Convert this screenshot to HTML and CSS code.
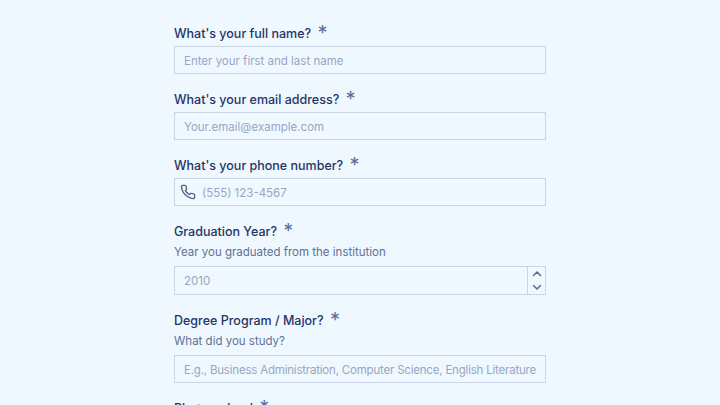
FILE: index.html
```html
<!DOCTYPE html>
<html lang="en">
<head>
  <meta charset="UTF-8" />
  <title>Application form</title>
  <link rel="stylesheet" href="styles.css">
</head>
<body>
  <form class="form" autocomplete="off">
    <div class="field">
      <label class="label" for="fullName">What's your full name? <span class="req">*</span></label>
      <input class="input" type="text" id="fullName" placeholder="Enter your first and last name" />
    </div>
    <div class="field">
      <label class="label" for="email">What's your email address? <span class="req">*</span></label>
      <input class="input" type="text" id="email" placeholder="Your.email@example.com" />
    </div>
    <div class="field">
      <label class="label" for="phone">What's your phone number? <span class="req">*</span></label>
      <div class="box">
        <svg class="phone-icon" width="16" height="16" viewBox="0 0 24 24" fill="none" stroke="#4f6088" stroke-width="2" stroke-linecap="round" stroke-linejoin="round">
          <path d="M22 16.9v3a2 2 0 0 1-2.2 2 19.8 19.8 0 0 1-8.6-3.1 19.5 19.5 0 0 1-6-6A19.8 19.8 0 0 1 2.1 4.2 2 2 0 0 1 4.1 2h3a2 2 0 0 1 2 1.7c.1 1 .4 1.9.7 2.8a2 2 0 0 1-.5 2.1L8.1 9.9a16 16 0 0 0 6 6l1.3-1.3a2 2 0 0 1 2.1-.4c.9.3 1.8.6 2.8.7a2 2 0 0 1 1.7 2z"/>
        </svg>
        <input class="input-bare" type="text" id="phone" placeholder="(555) 123-4567" />
      </div>
    </div>
    <div class="field">
      <label class="label" for="year">Graduation Year? <span class="req">*</span></label>
      <p class="hint">Year you graduated from the institution</p>
      <div class="box box-tall">
        <input class="input-bare year" type="text" id="year" placeholder="2010" />
        <div class="stepper">
          <button class="step" type="button">
            <svg width="12" height="12" viewBox="0 0 12 12" fill="none" stroke="#5a6b92" stroke-width="1.5" stroke-linecap="round" stroke-linejoin="round"><path d="M2.5 7.5 6 4l3.5 3.5"/></svg>
          </button>
          <button class="step" type="button">
            <svg width="12" height="12" viewBox="0 0 12 12" fill="none" stroke="#5a6b92" stroke-width="1.5" stroke-linecap="round" stroke-linejoin="round"><path d="M2.5 4.5 6 8l3.5-3.5"/></svg>
          </button>
        </div>
      </div>
    </div>
    <div class="field">
      <label class="label" for="major">Degree Program / Major? <span class="req">*</span></label>
      <p class="hint">What did you study?</p>
      <input class="input input-long" type="text" id="major" placeholder="E.g., Business Administration, Computer Science, English Literature" />
    </div>
    <div class="field">
      <label class="label" for="photo">Photo upload <span class="req">*</span></label>
    </div>
  </form>
</body>
</html>
```

FILE: styles.css
```css
html, body {
  height: 405px;
  overflow: hidden;
}

body {
  margin: 0;
  background: #f0f8ff;
  font-family: Inter, 'Noto Sans', sans-serif;
  color: #1f3566;
}

.form {
  width: 372px;
  margin: 0 auto;
  padding-top: 24px;
  display: flex;
  flex-direction: column;
  gap: 16px;
}

.field {
  display: flex;
  flex-direction: column;
}

.label {
  font-size: 12.5px;
  font-weight: 500;
  line-height: 20px;
  height: 18px;
  margin-bottom: 4px;
  white-space: nowrap;
}

.req {
  font-size: 20px;
  font-weight: 400;
  line-height: 0;
  color: #5a6f9c;
  margin-left: 3px;
  position: relative;
  top: 2px;
}

.hint {
  margin: -1px 0 5px;
  font-size: 11.5px;
  line-height: 18px;
  color: #5f7095;
}

.input,
.box {
  box-sizing: border-box;
  width: 100%;
  height: 28px;
  border: 1.5px solid #c9d4e5;
  background: #f0f8ff;
}

.box-tall {
  height: 29px;
}

.input {
  padding: 1px 9px 0;
  font: inherit;
  font-size: 11.5px;
  color: #1f3566;
  outline: none;
}

.input-long {
  letter-spacing: -0.2px;
}

.box {
  display: flex;
  align-items: center;
}

.input-bare {
  flex: 1;
  min-width: 0;
  height: 100%;
  padding: 1px 9px 0 6px;
  border: none;
  background: none;
  font: inherit;
  font-size: 11.5px;
  outline: none;
}

.input-bare.year {
  padding-left: 9px;
}

.input::placeholder,
.input-bare::placeholder {
  color: #98a6c2;
  opacity: 1;
}

.phone-icon {
  flex: none;
  margin-left: 5px;
}

.stepper {
  flex: none;
  width: 17px;
  height: 100%;
  display: flex;
  flex-direction: column;
  border-left: 1.5px solid #c9d4e5;
}

.step {
  flex: 1;
  padding: 0;
  border: none;
  background: none;
  display: flex;
  align-items: center;
  justify-content: center;
}
```
